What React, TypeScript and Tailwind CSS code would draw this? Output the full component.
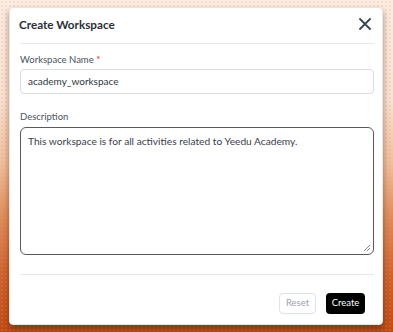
import React from "react";

export default function App() {
  return (
    <div
      className="relative h-[332px] w-full overflow-hidden pt-[7px] pl-[9px] pr-[10px]"
      style={{
        fontFamily: "Lato, 'Noto Sans', sans-serif",
      }}
    >
      <div className="absolute inset-0 bg-[linear-gradient(180deg,#fcece2_0%,#fae2d2_30%,#f0bd9a_50%,#e08d5c_65%,#cf6430_82%,#c04a12_100%)]" />
      <div className="absolute inset-0 bg-[radial-gradient(circle,rgba(230,150,110,0.35)_0.8px,transparent_1px)] bg-[length:4px_4px] opacity-60" />
      <div className="relative h-[318px] rounded-[4px] border border-[#e6e6e6] bg-white pl-[10px] pr-[8px] shadow-[0_4px_6px_rgba(60,20,0,0.45)]">
        <div className="flex h-[35px] items-center justify-between">
          <div className="ml-[-1px] mt-[-4px] text-[11.7px] font-bold leading-[14px] text-[#2b2f36]">Create Workspace</div>
          <svg width="12" height="12" viewBox="0 0 12 12" className="mr-[3px] mt-[-3px]">
            <path d="M1 1 L11 11 M11 1 L1 11" stroke="#3a4350" strokeWidth="1.8" strokeLinecap="round" />
          </svg>
        </div>
        <div className="h-px bg-[#e6e8ee]" />
        <div className="mt-[9px] text-[9.5px] leading-[14px] text-[#4b5260]">
          Workspace Name <span className="text-[#e11d2e]">*</span>
        </div>
        <div className="mt-[2px] flex h-[25px] items-center rounded-[4px] border border-[#d6dde8] px-[7px] text-[10px] text-[#2f3640]">
          academy_workspace
        </div>
        <div className="mt-[16px] text-[9.5px] leading-[14px] text-[#4b5260]">Description</div>
        <div className="relative mt-[3px] h-[128px] rounded-[6px] border-[1.5px] border-[#5a5a5a] px-[7px] pt-[6px] text-[10.2px] leading-[14px] text-[#3a404c]">
          This workspace is for all activities related to Yeedu Academy.
          <svg width="8" height="8" viewBox="0 0 8 8" className="absolute bottom-[2px] right-[2px]">
            <path d="M7 1 L1 7 M7 4 L4 7" stroke="#8a8a8a" strokeWidth="1" />
          </svg>
        </div>
        <div className="mt-[19px] h-px bg-[#e6e8ee]" />
        <div className="mt-[18px] flex justify-end gap-[10px] pr-[9px]">
          <div className="flex h-[21px] w-[37px] items-center justify-center rounded-[4px] border border-[#dbe3ee] text-[9.5px] text-[#9aa3b0]">
            Reset
          </div>
          <div className="flex h-[21px] w-[39px] items-center justify-center rounded-[4px] bg-black text-[9.5px] text-white">
            Create
          </div>
        </div>
      </div>
    </div>
  );
}
